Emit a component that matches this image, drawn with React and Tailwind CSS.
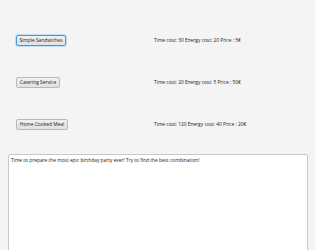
export default function App() {
  const rows = [
    { name: "Simple Sandwiches", info: "Time cost: 30 Energy cost: 20 Price : 5€", w: "w-[50px]", focus: true },
    { name: "Catering Service", info: "Time cost: 20 Energy cost: 5 Price : 50€", w: "w-[44px]" },
    { name: "Home Cooked Meal", info: "Time cost: 120 Energy cost: 40 Price : 20€", w: "w-[52px]" },
  ];
  return (
    <div className="w-[315px] h-[250px] bg-[#f4f4f4] overflow-hidden text-[4.85px] text-[#1a1a1a]" style={{ fontFamily: '"Open Sans", "Noto Sans", sans-serif' }}>
      <div className="flex flex-col gap-[31px] pt-[35px]">
        {rows.map((r) => (
          <div key={r.name} className="flex items-center h-[11px]">
            <div className="w-[154px] pl-[16px] flex">
              <button
                className={`${r.w} h-[11px] flex items-center justify-center rounded-[2px] bg-gradient-to-b from-[#f0f0f0] to-[#e2e2e2] leading-none whitespace-nowrap ${r.focus ? "border border-[#3d9be0] ring-1 ring-[#bfe0f6]" : "border border-[#b9b9b9]"}`}
              >
                {r.name}
              </button>
            </div>
            <span className="leading-none whitespace-nowrap">{r.info}</span>
          </div>
        ))}
      </div>
      <div className="mt-[24px] ml-[8px] w-[300px] h-[110px] bg-white border border-[#c8c8c8] rounded-[2px] px-[2px] pt-[3px] leading-none">
        Time to prepare the most epic birthday party ever! Try to find the best combination!
      </div>
    </div>
  );
}
